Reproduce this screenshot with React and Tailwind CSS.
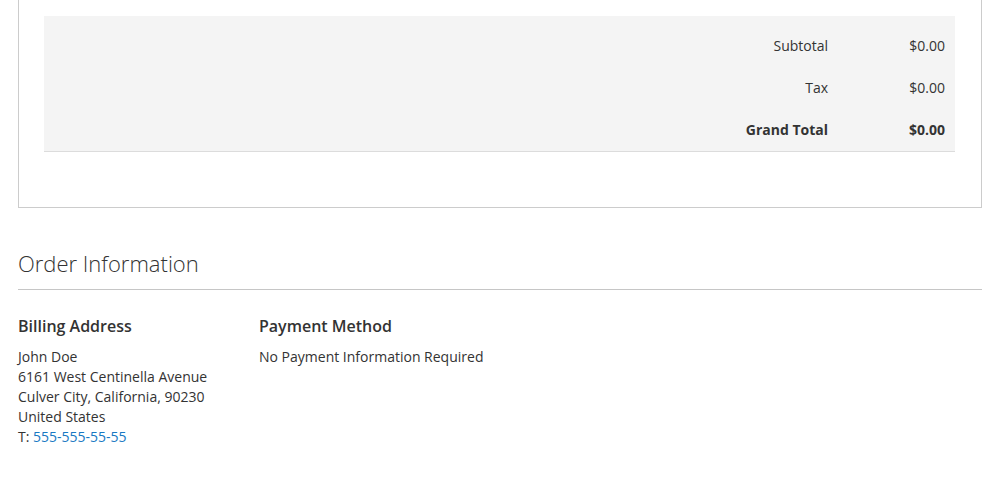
export default function App() {
  const totals = [
    { label: "Subtotal", value: "$0.00" },
    { label: "Tax", value: "$0.00" },
  ];

  return (
    <div
      className="bg-white text-[#333] text-[14px] px-[18px] pb-10"
      style={{ fontFamily: '"Open Sans", "Noto Sans", sans-serif' }}
    >
      {/* order items box (top cut off) */}
      <div className="border-x border-b border-[#ccc] pl-[25px] pr-[26px] pt-4 pb-[55px]">
        <div className="bg-[#f4f4f4] border-b border-[#dcdcdc] pt-2 pb-px">
          {totals.map((row) => (
            <div key={row.label} className="flex justify-end items-center h-[42px]">
              <span className="px-[10px]">{row.label}</span>
              <span className="w-[117px] px-[10px] text-right">{row.value}</span>
            </div>
          ))}
          <div className="flex justify-end items-center h-[42px] font-bold">
            <span className="px-[10px]">Grand Total</span>
            <span className="w-[117px] px-[10px] text-right">$0.00</span>
          </div>
        </div>
      </div>

      <h2 className="mt-[42px] text-[22px] font-light leading-[26px] pb-[13px] border-b border-[#c6c6c6]">
        Order Information
      </h2>

      <div className="flex mt-[25px]">
        <div className="w-[241px]">
          <h3 className="text-[16px] font-semibold leading-[22px]">Billing Address</h3>
          <div className="mt-[10px] leading-[20px]">
            <div>John Doe</div>
            <div>6161 West Centinella Avenue</div>
            <div>Culver City, California, 90230</div>
            <div>United States</div>
            <div>
              T: <a href="#" className="text-[#1979c3]">555-555-55-55</a>
            </div>
          </div>
        </div>
        <div>
          <h3 className="text-[16px] font-semibold leading-[22px]">Payment Method</h3>
          <div className="mt-[10px] leading-[20px]">No Payment Information Required</div>
        </div>
      </div>
    </div>
  );
}
